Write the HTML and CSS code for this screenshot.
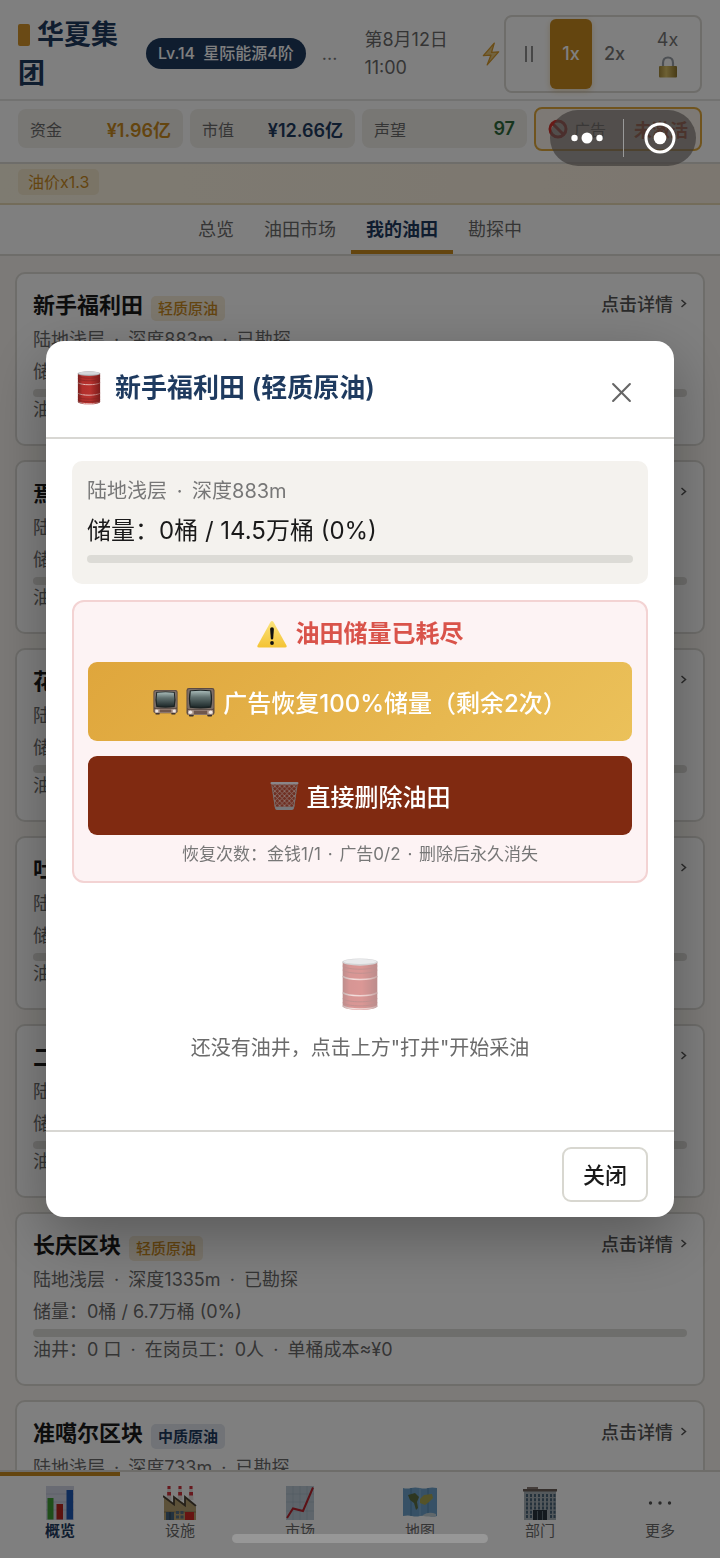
FILE: index.html
```
<!DOCTYPE html>
<html lang="zh-CN">
<head>
<meta charset="utf-8">
<meta name="viewport" content="width=device-width, initial-scale=1">
<title>华夏集团 - 我的油田</title>
<link rel="stylesheet" href="styles.css">
</head>
<body>
<svg class="defs" aria-hidden="true">
  <defs>
    <linearGradient id="drum" x1="0" x2="1" y1="0" y2="0">
      <stop offset="0" stop-color="#7d1f1d"/><stop offset=".2" stop-color="#b02f2c"/><stop offset=".55" stop-color="#b8322e"/><stop offset="1" stop-color="#7a1c1b"/>
    </linearGradient>
    <linearGradient id="rim" x1="0" x2="1" y1="0" y2="0">
      <stop offset="0" stop-color="#8c6664"/><stop offset=".3" stop-color="#eac0bd"/><stop offset=".7" stop-color="#d79c99"/><stop offset="1" stop-color="#8a4a48"/>
    </linearGradient>
    <linearGradient id="glass" x1="0" x2="0" y1="0" y2="1">
      <stop offset="0" stop-color="#a8bab8"/><stop offset=".4" stop-color="#60706f"/><stop offset="1" stop-color="#202b2c"/>
    </linearGradient>
    <linearGradient id="warn" x1="0" x2="0" y1="0" y2="1">
      <stop offset="0" stop-color="#fbe37c"/><stop offset="1" stop-color="#f4c334"/>
    </linearGradient>
    <linearGradient id="brass" x1="0" x2="1" y1="0" y2="0">
      <stop offset="0" stop-color="#a58a3a"/><stop offset=".4" stop-color="#dcc268"/><stop offset="1" stop-color="#8f762c"/>
    </linearGradient>
    <pattern id="mesh" width="5" height="5" patternUnits="userSpaceOnUse">
      <path d="M0 0 5 5M5 0 0 5" stroke="#8f7d79" stroke-width=".8"/>
    </pattern>
    <symbol id="i-drum" viewBox="0 0 36 52">
      <path d="M1 4v43c0 2 7 4 17 4s17-2 17-4V4z" fill="url(#drum)"/>
      <path d="M1 8c3 2 10 3 17 3s14-1 17-3M1 12c3 2 10 3 17 3s14-1 17-3M1 40c3 2 10 3 17 3s14-1 17-3M1 44c3 2 10 3 17 3s14-1 17-3" fill="none" stroke="#7f2422" stroke-width=".9"/>
      <path d="M1 18c3 2 10 3 17 3s14-1 17-3M1 34c3 2 10 3 17 3s14-1 17-3M1 47c3 2 10 3 17 3s14-1 17-3" fill="none" stroke="url(#rim)" stroke-width="1.500"/>
      <ellipse cx="18" cy="4" rx="17.500" ry="3.500" fill="#a7a8ab"/>
      <ellipse cx="18" cy="3.400" rx="16" ry="2.500" fill="#d4d7da"/>
    </symbol>
    <symbol id="i-tv" viewBox="0 0 30 30">
      <rect x="3" y="27" width="5" height="3" rx="1" fill="#3a312e"/><rect x="22" y="27" width="5" height="3" rx="1" fill="#3a312e"/>
      <rect x=".5" y=".5" width="29" height="28" rx="2.500" fill="#5b4a43"/>
      <rect x="1.500" y="1.500" width="27" height="21" rx="2" fill="#7d6f67"/>
      <path d="M4 3Q15 1.500 26 3q2 9 0 18Q15 22.500 4 21 2 12 4 3z" fill="#1c2323"/>
      <path d="M5 4q10-1.500 20 0 1.500 8 0 15.500-10 1.500-20 0Q3.500 12 5 4z" fill="url(#glass)"/>
      <rect x="2" y="23.500" width="26" height="4.500" fill="#b39d92"/>
      <rect x="8" y="24" width="14" height="3.500" fill="#6f574d"/>
      <circle cx="4.500" cy="25.700" r="1.800" fill="#f0e8e3"/><circle cx="25.500" cy="25.700" r="1.800" fill="#f0e8e3"/>
    </symbol>
    <symbol id="i-warn" viewBox="0 0 30 27">
      <path d="M13.500 1q1.500-2 3 0L29.500 24.500q.8 2-1.500 2H2q-2.300 0-1.500-2z" fill="url(#warn)"/>
      <path d="M13.100 8q0-1.800 1.900-1.800T16.900 8l-.7 9.500q-.1 1-1.200 1t-1.200-1z" fill="#111"/>
      <circle cx="15" cy="22" r="1.900" fill="#111"/>
    </symbol>
    <symbol id="i-bin" viewBox="0 0 30 30">
      <path d="M1.500 2h27L25 27q-.2 2-2 2H7q-1.800 0-2-2z" fill="#6f2f22"/>
      <path d="M1.500 2h27L25 27q-.2 2-2 2H7q-1.800 0-2-2z" fill="url(#mesh)"/>
      <path d="M5 26h20l-.3 2q-.3 1.500-2 1.500H7q-1.500 0-1.700-1.500z" fill="#77777a"/>
      <rect x=".5" y=".5" width="29" height="2.500" rx="1.200" fill="#8a8689"/>
      <path d="M2 4l3.500 23M28 4l-3.500 23" stroke="#77706f" fill="none"/>
    </symbol>
  </defs>
</svg>

<div class="app">
  <header class="topbar">
    <h1 class="brand"><span class="brand-mark"></span>华夏集团</h1>
    <span class="level"><span class="level-no">Lv.14</span> 星际能源4阶</span>
    <span class="more-dots">...</span>
    <time class="clock">第8月12日 11:00</time>
    <svg class="bolt" viewBox="0 0 16 22"><path d="M11 1 1 12.500 8 12 4.500 21 15 9 8.500 9.500z" fill="#e5c67f" stroke="#d69a2c" stroke-width="1.200" stroke-linejoin="round"/></svg>
    <div class="speed">
      <button class="speed-btn" aria-label="暂停"><svg class="pause" viewBox="0 0 8 16"><path d="M1 0v16M7 0v16" stroke="#6b6b6b" stroke-width="1.500"/></svg></button>
      <button class="speed-btn is-active">1x</button>
      <button class="speed-btn">2x</button>
      <button class="speed-btn speed-locked">4x
        <svg class="lock" viewBox="0 0 20 22"><path d="M5 11V7q0-5.500 5-5.500T15 7v4" fill="none" stroke="#9aa0a8" stroke-width="2.200"/><rect x="1" y="10" width="18" height="11.500" rx="1" fill="url(#brass)"/></svg>
      </button>
    </div>
  </header>

  <section class="stats">
    <div class="stat"><span>资金</span><b class="gold">¥1.96亿</b></div>
    <div class="stat"><span>市值</span><b class="navy">¥12.66亿</b></div>
    <div class="stat"><span>声望</span><b class="green">97</b></div>
    <div class="stat stat-ad">
      <span class="ad-label"><svg class="ban" viewBox="0 0 20 20"><circle cx="10" cy="10" r="8" fill="none" stroke="#d3322c" stroke-width="3"/><path d="M4.500 4.500l11 11" stroke="#d3322c" stroke-width="3"/></svg>广告</span>
      <b class="red">未激活</b>
    </div>
  </section>

  <div class="events"><span class="event">油价x1.3</span></div>

  <nav class="tabs">
    <button class="tab">总览</button>
    <button class="tab">油田市场</button>
    <button class="tab is-active">我的油田</button>
    <button class="tab">勘探中</button>
  </nav>

  <main class="fields">
    <article class="field">
      <div class="field-head"><h2>新手福利田</h2><span class="grade">轻质原油</span><a class="detail" href="#">点击详情 <svg class="chev" viewBox="0 0 6 9"><path d="M1 1l4 3.500L1 8"/></svg></a></div>
      <p>陆地浅层<span class="sep"> · </span>深度883m<span class="sep"> · </span>已勘探</p><p>储量：0桶 / 14.5万桶 (0%)</p><div class="meter"></div>
      <p class="wells">油井：0 口<span class="sep"> · </span>在岗员工：0人<span class="sep"> · </span>单桶成本≈¥0</p>
    </article>
    <article class="field">
      <div class="field-head"><h2>焉耆区块</h2><span class="grade">轻质原油</span><a class="detail" href="#">点击详情 <svg class="chev" viewBox="0 0 6 9"><path d="M1 1l4 3.500L1 8"/></svg></a></div>
      <p>陆地浅层</p><p>储量：0桶</p><div class="meter"></div><p class="wells">油井：0 口</p>
    </article>
    <article class="field">
      <div class="field-head"><h2>花土沟</h2><span class="grade">轻质原油</span><a class="detail" href="#">点击详情 <svg class="chev" viewBox="0 0 6 9"><path d="M1 1l4 3.500L1 8"/></svg></a></div>
      <p>陆地浅层</p><p>储量：0桶</p><div class="meter"></div><p class="wells">油井：0 口</p>
    </article>
    <article class="field">
      <div class="field-head"><h2>吐哈区块</h2><span class="grade">轻质原油</span><a class="detail" href="#">点击详情 <svg class="chev" viewBox="0 0 6 9"><path d="M1 1l4 3.500L1 8"/></svg></a></div>
      <p>陆地浅层</p><p>储量：0桶</p><div class="meter"></div><p class="wells">油井：0 口</p>
    </article>
    <article class="field">
      <div class="field-head"><h2>二连区块</h2><span class="grade">轻质原油</span><a class="detail" href="#">点击详情 <svg class="chev" viewBox="0 0 6 9"><path d="M1 1l4 3.500L1 8"/></svg></a></div>
      <p>陆地浅层</p><p>储量：0桶</p><div class="meter"></div><p class="wells">油井：0 口</p>
    </article>
    <article class="field">
      <div class="field-head"><h2>长庆区块</h2><span class="grade">轻质原油</span><a class="detail" href="#">点击详情 <svg class="chev" viewBox="0 0 6 9"><path d="M1 1l4 3.500L1 8"/></svg></a></div>
      <p>陆地浅层<span class="sep"> · </span>深度1335m<span class="sep"> · </span>已勘探</p><p>储量：0桶 / 6.7万桶 (0%)</p><div class="meter"></div>
      <p class="wells">油井：0 口<span class="sep"> · </span>在岗员工：0人<span class="sep"> · </span>单桶成本≈¥0</p>
    </article>
    <article class="field">
      <div class="field-head"><h2>准噶尔区块</h2><span class="grade grade-mid">中质原油</span><a class="detail" href="#">点击详情 <svg class="chev" viewBox="0 0 6 9"><path d="M1 1l4 3.500L1 8"/></svg></a></div>
      <p>陆地浅层<span class="sep"> · </span>深度733m<span class="sep"> · </span>已勘探</p>
    </article>
  </main>

  <nav class="dock">
    <button class="dock-item is-active">
      <svg class="dock-icon" viewBox="0 0 34 34"><rect x="3" width="28" height="34" fill="#d3d6e6"/><path d="M3 8h28M3 16h28M3 24h28" stroke="#bfc3d6"/><rect x="4.500" y="12" width="6" height="21.500" fill="#3f9c35"/><rect x="13.500" y="18" width="6.500" height="15.500" fill="#b8251f"/><rect x="23.500" y="4" width="6.500" height="29.500" fill="#1f58b5"/></svg>
      概览</button>
    <button class="dock-item">
      <svg class="dock-icon" viewBox="0 0 34 34"><path d="M4.500 0h3l1 14h-5zM15.500 0h3l1 14h-5zM26.500 0h3l1 14h-5z" fill="#e6dfdd"/><path d="M4.500 0h3v3h-3zM4.200 6h3.800v3.500H4.200zM15.500 0h3v3h-3zM15.200 6H19v3.500h-3.800zM26.500 0h3v3h-3zM26.200 6H30v3.500h-3.800z" fill="#d0333c"/><path d="M1 34V11l10 7v-7l11 7v-7l11 10v13z" fill="#b9a372"/><path d="M0 10l11 8.500V11l11 8.500V11l11 9" fill="none" stroke="#4a4134" stroke-width="1.800"/><path d="M1 26h32" stroke="#8f7d57"/><rect x="3" y="26" width="8" height="8" fill="#46647e"/><path d="M7 26v8" stroke="#2f4354"/><path d="M13 25h3v3h-3zM17.500 25h3v3h-3zM13 29.500h3v3h-3zM17.500 29.500h3v3h-3z" fill="#5a7287"/><rect x="22" y="26" width="9" height="8" fill="#cf2a25"/></svg>
      设施</button>
    <button class="dock-item">
      <svg class="dock-icon" viewBox="0 0 34 34"><rect x="3" width="28" height="34" fill="#bccbd6"/><path d="M10 0v34M17 0v34M24 0v34M3 8h28M3 16h28M3 25h28" stroke="#a6b8c6" stroke-width=".7"/><path d="M4 32l6-9.500L20 25l10-23.500" fill="none" stroke="#b8222b" stroke-width="2"/></svg>
      市场</button>
    <button class="dock-item">
      <svg class="dock-icon" viewBox="0 0 34 34"><path d="M0 2q4 1 8 0t9 0q4 1 8 0t9 0v28q-4 1-8 0t-9 0q-4 1-8 0t-9 0z" fill="#6fa3cc"/><path d="M8 2v28M25 2v28" stroke="#5588b2"/><path d="M17 2v28" stroke="#8dbbdc"/><path d="M5 9l7-2 4 4-2 5 1 6-2 2-2-7-4-3z" fill="#5c6f43"/><path d="M17 13l4-4 8-1 1 4-4 4-4 3-5-2z" fill="#aaa650"/><path d="M20 29q6-4 13-1v2q-7 1-13 0z" fill="#c2d0d6"/></svg>
      地图</button>
    <button class="dock-item">
      <svg class="dock-icon" viewBox="0 0 34 34"><path d="M4 1h11v3H4z" fill="#8a7d77"/><rect x="1" y="4" width="32" height="30" fill="#a9b2b8"/><rect y="3" width="34" height="2.500" fill="#6a5f58"/><path d="M4 8v25M8 8v25M12 8v16M16 8v16M20 8v16M24 8v16M28 8v25M31.500 8v25" stroke="#4a6478" stroke-width="2" stroke-dasharray="3 1.200"/><rect x="10" y="24" width="14" height="10" fill="#27333c"/><path d="M14.500 25v9M19.500 25v9" stroke="#64747f"/></svg>
      部门</button>
    <button class="dock-item">
      <svg class="dock-icon" viewBox="0 0 34 34"><circle cx="7.500" cy="17" r="1.700" fill="#555"/><circle cx="17" cy="17" r="1.700" fill="#555"/><circle cx="26.500" cy="17" r="1.700" fill="#555"/></svg>
      更多</button>
  </nav>
</div>

<div class="overlay">
  <section class="dialog" role="dialog" aria-modal="true" aria-labelledby="dlg-title">
    <header class="dialog-head">
      <svg class="drum-sm"><use href="#i-drum"/></svg>
      <h2 id="dlg-title">新手福利田 (轻质原油)</h2>
      <button class="dialog-x" aria-label="关闭对话框"><svg viewBox="0 0 20 20"><path d="M2 2l16 16M18 2L2 18" stroke="#666" stroke-width="2" stroke-linecap="round"/></svg></button>
    </header>
    <div class="dialog-body">
      <div class="info">
        <p class="info-sub">陆地浅层<span class="sep"> · </span>深度883m</p>
        <p class="info-main">储量：0桶 / 14.5万桶 (0%)</p>
        <div class="meter"></div>
      </div>
      <div class="danger">
        <p class="danger-title"><svg class="warn"><use href="#i-warn"/></svg>油田储量已耗尽</p>
        <button class="action action-ad"><svg class="tv-sm"><use href="#i-tv"/></svg><svg class="emoji"><use href="#i-tv"/></svg>广告恢复100%储量（剩余2次）</button>
        <button class="action action-delete"><svg class="emoji"><use href="#i-bin"/></svg>直接删除油田</button>
        <p class="danger-note">恢复次数：金钱1/1<span class="sep-sm"> · </span>广告0/2<span class="sep-sm"> · </span>删除后永久消失</p>
      </div>
      <div class="empty">
        <svg class="drum-lg"><use href="#i-drum"/></svg>
        <p>还没有油井，点击上方"打井"开始采油</p>
      </div>
    </div>
    <footer class="dialog-foot"><button class="close-btn">关闭</button></footer>
  </section>
</div>

<div class="capsule">
  <button aria-label="更多"><svg class="cap-dots" viewBox="0 0 32 12"><circle cx="3.500" cy="6" r="3.200" fill="#fff"/><circle cx="16" cy="6" r="5.500" fill="#fff"/><circle cx="28.500" cy="6" r="3.200" fill="#fff"/></svg></button>
  <button aria-label="退出"><svg class="cap-ring" viewBox="0 0 32 32"><circle cx="16" cy="16" r="14" fill="none" stroke="#fff" stroke-width="3"/><circle cx="16" cy="16" r="6.300" fill="#fff"/></svg></button>
</div>
<div class="home-bar"></div>
</body>
</html>
```

FILE: styles.css
```
* { box-sizing: border-box; }
html, body { height: 100%; }
body {
  margin: 0;
  overflow: hidden;
  font-family: Inter, "Noto Sans CJK SC", sans-serif;
  font-size: 18px;
  color: #1a1a1a;
  background: #f8f5f0;
}
h1, h2, p { margin: 0; }
button { font: inherit; color: inherit; border: 0; background: none; padding: 0; }
svg { flex: none; }
.defs { position: absolute; width: 0; height: 0; }
.sep { margin: 0 4px; }
.sep-sm { margin: 0 2px; }

.app { display: flex; flex-direction: column; height: 100%; }

.topbar {
  display: flex;
  align-items: center;
  height: 101px;
  padding: 8px 18px 0;
  background: #fff;
  border-bottom: 2px solid #e5e4e2;
}
.brand { width: 104px; margin-right: 24px; font-size: 27px; line-height: 39px; font-weight: 700; color: #1e3a5f; }
.brand-mark { display: inline-block; width: 12px; height: 22px; margin-right: 7px; border-radius: 2px; background: #d4942a; vertical-align: -2px; }
.level { padding: 0 12px; border-radius: 16px; background: #1e3a5f; color: #fff; font-size: 16px; font-weight: 500; line-height: 31px; white-space: nowrap; }
.level-no { margin-right: 4px; }
.more-dots { margin-left: 16px; color: #777; }
.clock { width: 88px; margin-left: 27px; line-height: 28px; color: #6b6b6b; }
.bolt { width: 18px; height: 24px; margin-left: auto; margin-right: 4px; }
.speed {
  display: grid;
  grid-template-columns: 42px 42px 45px 1fr;
  width: 198px;
  height: 78px;
  padding: 2px;
  border: 2px solid #dcdad5;
  border-radius: 8px;
  font-weight: 500;
  color: #777;
}
.speed-btn { display: flex; flex-direction: column; align-items: center; justify-content: center; border-radius: 6px; }
.speed-btn.is-active { background: #c98a1f; color: #fff; box-shadow: 0 2px 6px rgba(200, 138, 31, .3); }
.speed-locked { gap: 6px; font-weight: 400; }
.pause { width: 8px; height: 16px; }
.lock { width: 20px; height: 22px; }

.stats {
  display: grid;
  grid-template-columns: 1fr 1fr 1fr 168px;
  gap: 7px;
  align-items: center;
  height: 63px;
  padding: 0 18px 6px;
  background: #fff;
  border-bottom: 2px solid #dcdad5;
}
.stat { display: flex; align-items: center; justify-content: space-between; height: 39px; padding: 0 12px; border-radius: 8px; background: #f0eee9; font-size: 16px; color: #6b6b6b; white-space: nowrap; }
.stat b { font-size: 18px; font-weight: 600; }
.stat-ad { height: 44px; background: #fbf3ea; border: 2px solid #e0a93c; }
.ad-label { display: flex; align-items: center; gap: 6px; }
.ban { width: 20px; height: 20px; }
.stat .gold { color: #c98a1f; }
.stat .navy { color: #1e3a5f; }
.stat .green { color: #2f6b3c; }
.stat .red { color: #d3532c; }

.events { display: flex; align-items: center; height: 41px; padding: 0 18px 3px; background: linear-gradient(90deg, #fdf6e3, #f9eee0); border-bottom: 2px solid #e6d9b4; }
.event { padding: 0 10px; border-radius: 5px; background: #f4e8cc; color: #c98a1f; font-size: 16px; line-height: 26px; }

.tabs { display: flex; justify-content: center; height: 51px; background: #fff; border-bottom: 2px solid #dcdad5; }
.tab { padding: 0 15px; border-bottom: 4px solid transparent; color: #6b6b6b; }
.tab.is-active { border-color: #c98a1f; color: #1e3a5f; font-weight: 700; }

.fields { flex: 1; min-height: 0; overflow: hidden; display: flex; flex-direction: column; gap: 14px; padding: 16px 15px 0; }
.field { flex: none; padding: 15px 16px 22px; border: 2px solid #dcdad5; border-radius: 10px; background: #fff; color: #6b6b6b; }
.field-head { display: flex; align-items: center; height: 32px; margin-bottom: 3px; }
.field-head h2 { font-size: 22px; line-height: 32px; font-weight: 700; color: #1a1a1a; }
.grade { margin: 7px 0 0 8px; padding: 0 7px; border-radius: 5px; background: #f6ecd9; color: #c98a1f; font-size: 15px; font-weight: 500; line-height: 25px; }
.grade-mid { background: #e2e6ee; color: #1e3a5f; font-weight: 700; }
.detail { display: flex; align-items: center; gap: 7px; margin: 0 0 4px auto; color: #555; font-weight: 500; text-decoration: none; }
.chev { width: 7px; height: 9px; fill: none; stroke: #555; stroke-width: 1.5; }
.field p { line-height: 32px; }
.meter { height: 8px; border-radius: 4px; background: #dddcd8; }
.field .meter { margin-top: 1px; }
.field .wells { padding-top: 1px; line-height: 24px; }

.dock { display: grid; grid-template-columns: repeat(6, 1fr); height: 88px; background: #fff; border-top: 2px solid #dcdad5; }
.dock-item { display: flex; flex-direction: column; align-items: center; padding-top: 10px; border-top: 4px solid transparent; font-size: 15px; line-height: 22px; color: #6b6b6b; }
.dock-item.is-active { border-color: #c98a1f; color: #1e3a5f; font-weight: 700; }
.dock-icon { width: 34px; height: 34px; }

.overlay { position: fixed; inset: 0; display: flex; align-items: center; justify-content: center; padding: 0 46px; background: rgba(0, 0, 0, .5); }
.dialog { width: 100%; border-radius: 18px; background: #fff; box-shadow: 0 20px 60px rgba(0, 0, 0, .3); }
.dialog-head { display: flex; align-items: center; padding: 23px 42px 25px 30px; border-bottom: 2px solid #d8d7d3; }
.dialog-head h2 { margin-left: 13px; font-size: 26px; line-height: 48px; font-weight: 600; color: #1e3a5f; }
.drum-sm { width: 26px; height: 34px; }
.dialog-x { display: flex; margin-left: auto; padding-top: 8px; }
.dialog-x svg { width: 21px; height: 21px; }

.dialog-body { padding: 22px 26px 0; }
.info { padding: 15px 15px 21px; border-radius: 10px; background: #f4f2ee; }
.info-sub { font-size: 20px; line-height: 31px; color: #777; }
.info-main { font-size: 24px; line-height: 48px; }
.info .meter { background: #dcdbd6; }
.danger { display: flex; flex-direction: column; margin-top: 16px; padding: 15px 14px; border: 2px solid #f3d3d3; border-radius: 12px; background: #fdf3f4; }
.danger-title { display: flex; align-items: center; justify-content: center; gap: 9px; margin-bottom: 11px; font-size: 24px; line-height: 34px; font-weight: 600; color: #d9534a; }
.warn { width: 30px; height: 27px; }
.action { display: flex; align-items: center; justify-content: center; gap: 8px; height: 79px; border-radius: 9px; color: #fff; font-size: 24px; font-weight: 500; white-space: nowrap; }
.action-ad { margin-bottom: 15px; background: linear-gradient(135deg, #dfa63c, #ebc15a); }
.action-delete { background: #802a11; }
.emoji { width: 29px; height: 30px; }
.tv-sm { width: 25px; height: 26px; }
.danger-note { margin-top: 7px; font-size: 17px; line-height: 24px; text-align: center; color: #777; }
.empty { display: flex; flex-direction: column; align-items: center; padding: 75px 0 67px; font-size: 20px; line-height: 30px; color: #6b6b6b; }
.drum-lg { width: 38px; height: 53px; margin-bottom: 22px; opacity: .5; }
.dialog-foot { display: flex; justify-content: flex-end; padding: 15px 26px; border-top: 2px solid #d8d7d3; }
.close-btn { height: 55px; padding: 0 19px 4px; border: 2px solid #d8d7d0; border-radius: 9px; font-size: 22px; font-weight: 500; }

.capsule { position: fixed; top: 110px; right: 24px; display: grid; grid-template-columns: 1fr 1fr; align-items: center; width: 146px; height: 56px; border-radius: 28px; background: rgba(60, 58, 56, .68); }
.capsule button { display: flex; align-items: center; justify-content: center; height: 38px; }
.capsule button + button { border-left: 1px solid #999; }
.cap-dots { width: 32px; height: 12px; }
.cap-ring { width: 32px; height: 32px; }
.home-bar { position: fixed; left: 50%; bottom: 15px; width: 256px; height: 9px; margin-left: -128px; border-radius: 5px; background: #979797; }
```
